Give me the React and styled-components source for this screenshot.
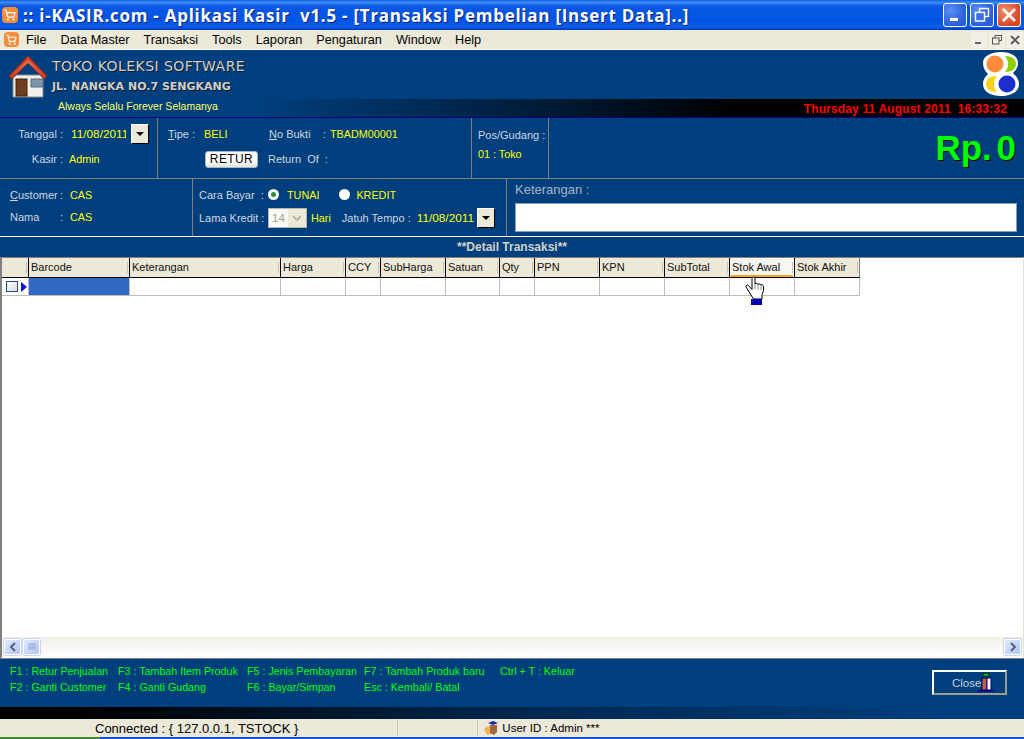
import React from 'react'
import styled, { createGlobalStyle } from 'styled-components'
import { ShoppingCart } from 'lucide-react'

const GlobalStyle = createGlobalStyle`
  html, body { margin: 0; padding: 0; background: #fff; overflow: hidden; }
  #root { width: 1024px; height: 739px; }
`

const ui = `'Liberation Sans', Arial, sans-serif`

const Page = styled.div`
  width: 1024px;
  height: 739px;
  display: flex;
  flex-direction: column;
  position: relative;
  overflow: hidden;
  font-family: ${ui};
  font-size: 12px;
`

const TitleBar = styled.div`
  height: 30px;
  flex: none;
  display: flex;
  align-items: center;
  padding: 0 3px 0 2px;
  box-sizing: border-box;
  background: linear-gradient(180deg, #0a5fe0 0%, #3d8df5 8%, #0a58e4 20%, #0054e3 70%, #0a5fe8 90%, #0038b8 100%);
`

const CartBadge = styled.span`
  display: inline-flex;
  align-items: center;
  justify-content: center;
  flex: none;
  width: ${p => p.$size}px;
  height: ${p => p.$size}px;
  border-radius: 4px;
  background: #f98c3a;
  color: #fff;
`

const Title = styled.div`
  flex: 1;
  margin-left: 5px;
  color: #fff;
  font-family: 'Open Sans', sans-serif;
  font-weight: bold;
  font-size: 17px;
  letter-spacing: 0.74px;
  white-space: pre;
  text-shadow: 1px 1px 0 #0f1f7a;
`

const WinButtons = styled.div`
  display: flex;
  gap: 3px;
`

const WinButton = styled.div`
  width: 24px;
  height: 24px;
  border: 1px solid #fff;
  border-radius: 3px;
  box-sizing: border-box;
  background: ${p => p.$close
    ? 'radial-gradient(circle at 30% 30%, #f0906c, #d9472a 70%)'
    : 'radial-gradient(circle at 30% 30%, #5c8df0, #2b5ed8 70%)'};
  display: flex;
  align-items: center;
  justify-content: center;
`

const MenuBar = styled.div`
  height: 20px;
  flex: none;
  display: flex;
  align-items: center;
  box-sizing: border-box;
  background: #ece9d8;
  border-bottom: 1px solid #fff;
  padding-left: 4px;
  font-size: 12.7px;
`

const MenuItem = styled.span`
  margin-left: ${p => p.$first ? 7 : 14}px;
  color: #000;
`

const MdiButtons = styled.div`
  margin-left: auto;
  display: flex;
  gap: 2px;
  margin-right: 1px;
`

const MdiButton = styled.div`
  width: 16px;
  height: 16px;
  background: #f2f0e6;
  display: flex;
  align-items: center;
  justify-content: center;
`

const Banner = styled.div`
  height: 49px;
  flex: none;
  display: flex;
  background: #003f7d;
  padding: 5px 5px 0 9px;
  box-sizing: border-box;
`

const ShopLines = styled.div`
  margin-left: 5px;
  display: flex;
  flex-direction: column;
`

const ShopName = styled.div`
  color: #d4d0c8;
  font-family: 'DejaVu Sans', sans-serif;
  font-size: ${p => p.$small ? 11 : 14}px;
  font-weight: ${p => p.$small ? 'bold' : 'normal'};
  letter-spacing: ${p => p.$small ? 0 : 0.45}px;
  line-height: 15px;
  margin-top: ${p => p.$small ? 5 : 4}px;
  text-shadow: 1px 1px 0 #10182a;
`

const Logo = styled.svg`
  margin: -3px 0 0 auto;
  flex: none;
`

const DarkBar = styled.div`
  flex: none;
  height: 12px;
  background: linear-gradient(90deg, #000 8%, #00264d 50%, #003f7d 92%);
`

const ClockBar = styled.div`
  flex: none;
  height: 19px;
  box-sizing: border-box;
  display: flex;
  align-items: center;
  justify-content: space-between;
  background: linear-gradient(90deg, #003f7d 0%, #003f7d 25%, #00264d 45%, #000 72%, #000 100%);
  padding: 0 17px 0 58px;
  border-bottom: 1px solid #000080;
`

const Tagline = styled.span`
  color: #ffff66;
  font-size: 10.5px;
  margin-bottom: 5px;
`

const Clock = styled.span`
  color: #f00;
  font-size: 12px;
  font-weight: bold;
  letter-spacing: 0.15px;
  white-space: pre;
  margin-top: 1px;
`

const InfoRow = styled.div`
  flex: none;
  height: ${p => p.$height}px;
  display: flex;
  background: #003f7d;
  border-bottom: ${p => p.$plain ? 'none' : '1px solid #808080'};
  box-sizing: border-box;
`

const Cell = styled.div`
  flex: ${p => p.$width ? `0 0 ${p.$width}px` : 1};
  box-sizing: border-box;
  border-right: ${p => p.$width ? '1px solid #808080' : 'none'};
  display: flex;
  flex-direction: column;
  padding: ${p => p.$pad || '0'};
  gap: ${p => p.$gap ?? 0}px;
`

const Line = styled.div`
  display: flex;
  align-items: center;
  height: ${p => p.$height || 20}px;
`

const Label = styled.span`
  color: #cfd6e2;
  font-size: 11px;
  white-space: pre;
  width: ${p => p.$width ? `${p.$width}px` : 'auto'};
  margin-left: ${p => p.$left || 0}px;
  text-align: ${p => p.$right ? 'right' : 'left'};
  flex: none;
  u { text-underline-offset: 1px; }
`

const Value = styled.span`
  color: #ffff00;
  font-size: ${p => p.$size || 10.8}px;
  white-space: pre;
  flex: none;
  width: ${p => p.$width ? `${p.$width}px` : 'auto'};
  margin-left: ${p => p.$left || 0}px;
  overflow: hidden;
`

const DropButton = styled.div`
  flex: none;
  width: 18px;
  height: 20px;
  box-sizing: border-box;
  margin-left: ${p => p.$left || 0}px;
  background: #ece9d8;
  border-style: solid;
  border-width: 1px;
  border-color: #fff #000 #000 #fff;
  display: flex;
  align-items: center;
  justify-content: center;
  &::after {
    content: '';
    border-left: 4px solid transparent;
    border-right: 4px solid transparent;
    border-top: 4px solid #000;
  }
`

const Retur = styled.div`
  width: 53px;
  height: 17px;
  flex: none;
  margin-left: 37px;
  box-sizing: border-box;
  background: linear-gradient(180deg, #fff 60%, #e6e3d6 100%);
  border: 1px solid #9fb6d4;
  border-radius: 3px;
  color: #000;
  font-size: 12px;
  letter-spacing: 0.4px;
  text-align: center;
  line-height: 15px;
`

const Total = styled.div`
  color: #00ff00;
  font-weight: bold;
  font-size: 35px;
  word-spacing: -5px;
  text-align: right;
  line-height: 40px;
  margin: 10px 8px 0 0;
  text-shadow: 1px 1px 0 #000;
`

const Radio = styled.span`
  flex: none;
  width: 11px;
  height: 11px;
  border-radius: 50%;
  background: #fff;
  margin-left: ${p => p.$left || 0}px;
  display: flex;
  align-items: center;
  justify-content: center;
  &::after {
    content: '';
    width: 5px;
    height: 5px;
    border-radius: 50%;
    background: ${p => p.$on ? '#2f8f3f' : 'transparent'};
  }
`

const SpinBox = styled.div`
  flex: none;
  width: 39px;
  height: 20px;
  box-sizing: border-box;
  border: 1px solid #b8b6a8;
  background: #ece9d8;
  display: flex;
  align-items: stretch;
  color: #a3a294;
  font-size: 11.5px;
`

const SpinText = styled.span`
  width: 19px;
  background: #f8f8f4;
  line-height: 18px;
  text-align: center;
`

const SpinArrow = styled.span`
  flex: 1;
  display: flex;
  align-items: center;
  justify-content: center;
`

const NoteLabel = styled.div`
  color: #a8b4c8;
  font-size: 13px;
  line-height: 16px;
`

const NoteInput = styled.div`
  height: 29px;
  width: 502px;
  background: #fff;
  border: 1px solid #8aa0b8;
  box-sizing: border-box;
  margin-top: 5px;
`

const GridPanel = styled.div`
  flex: none;
  height: 422px;
  box-sizing: border-box;
  border-top: 1px solid #fff;
  display: flex;
  flex-direction: column;
  background: #fff;
`

const GridTitle = styled.div`
  height: 20px;
  flex: none;
  background: #003f7d;
  color: #d4d0c8;
  font-weight: bold;
  font-size: 12px;
  text-align: center;
  line-height: 20px;
`

const GridBody = styled.div`
  flex: 1;
  border-left: 2px solid #808080;
  border-top: 1px solid #808080;
  border-right: 1px solid #e4e2d8;
  padding-bottom: 3px;
  display: flex;
  flex-direction: column;
  min-height: 0;
`

const GridHead = styled.div`
  display: flex;
  height: 20px;
  flex: none;
`

const HeadCell = styled.div`
  width: ${p => p.$width}px;
  flex: none;
  box-sizing: border-box;
  padding-left: 2px;
  background: ${p => p.$hot ? '#f7f6f0' : '#ece9d8'};
  border-right: 1px solid ${p => p.$last ? '#808080' : '#000'};
  border-bottom: 1px solid #000;
  line-height: 19px;
  font-size: 11px;
  color: #111;
  white-space: nowrap;
  overflow: hidden;
  position: relative;
  &::before {
    content: '';
    position: absolute;
    right: 1px;
    top: 4px;
    bottom: 4px;
    width: 1px;
    background: #c6c3b2;
  }
  ${p => p.$hot ? `&::after {
    content: '';
    position: absolute;
    left: 1px;
    right: 1px;
    bottom: 0;
    height: 2px;
    background: #f5a623;
  }` : ''}
`

const GridRow = styled.div`
  display: flex;
  height: 18px;
  flex: none;
`

const RowCell = styled.div`
  width: ${p => p.$width}px;
  flex: none;
  box-sizing: border-box;
  background: ${p => p.$active ? '#316ac5' : '#fff'};
  border-right: 1px solid #bdbdbd;
  border-bottom: 1px solid #bdbdbd;
`

const Indicator = styled.div`
  width: 27px;
  flex: none;
  box-sizing: border-box;
  border-right: 1px solid #bdbdbd;
  border-bottom: 1px solid #bdbdbd;
  display: flex;
  align-items: center;
  padding-left: 4px;
  gap: 3px;
`

const RowBox = styled.span`
  width: 12px;
  height: 11px;
  box-sizing: border-box;
  border: 1px solid #1d4f91;
  background: linear-gradient(135deg, #fff, #ddd);
`

const RowArrow = styled.span`
  border-left: 6px solid #1010e0;
  border-top: 5px solid transparent;
  border-bottom: 5px solid transparent;
`

const GridFill = styled.div`
  flex: 1;
`

const ScrollBar = styled.div`
  flex: none;
  height: 17px;
  display: flex;
  align-items: center;
  background: linear-gradient(180deg, #f3f1ec, #fefefe);
  border-top: 1px solid #eeece4;
  padding: 0 2px 0 2px;
`

const ScrollButton = styled.div`
  flex: none;
  width: 17px;
  height: 16px;
  margin-right: ${p => p.$end ? 0 : 2}px;
  box-sizing: border-box;
  border: 1px solid #fff;
  border-radius: 2px;
  background: linear-gradient(135deg, #dfe8fd, #b4c8f6);
  box-shadow: 0 0 0 1px #c7d5f8;
  display: flex;
  align-items: center;
  justify-content: center;
`

const Footer = styled.div`
  flex: none;
  height: 49px;
  background: #003f7d;
  border-top: 1px solid #808080;
  display: flex;
  box-sizing: border-box;
  padding: 5px 17px 0 10px;
`

const Hints = styled.div`
  flex: none;
  width: ${p => p.$width}px;
  display: flex;
  flex-direction: column;
`

const Hint = styled.span`
  color: #00ff00;
  font-size: 10.7px;
  line-height: 15.5px;
  white-space: pre;
`

const CloseButton = styled.div`
  margin: 6px 0 0 auto;
  width: 75px;
  height: 25px;
  box-sizing: border-box;
  border: 2px solid;
  border-color: #fff #a09c8c #a09c8c #fff;
  color: #c8cfdb;
  font-size: 11.5px;
  display: flex;
  align-items: center;
  padding-left: 18px;
`

const StatusBar = styled.div`
  flex: none;
  height: 18px;
  background: #ece9d8;
  display: flex;
  align-items: center;
  color: #000;
`

const StatusText = styled.span`
  white-space: pre;
  font-size: ${p => p.$size}px;
  margin-left: ${p => p.$left}px;
`

const StatusSplit = styled.span`
  width: 1px;
  height: 14px;
  background: #c8c5b2;
  margin-left: ${p => p.$left}px;
`

const TaskEdge = styled.div`
  flex: 1;
  background: linear-gradient(90deg, #3c8d3c 0 100px, #0a55d0 100px);
`

const Pointer = styled.svg`
  position: absolute;
  left: 744px;
  top: 276px;
`

const Icon = styled.svg`
  flex: none;
  margin-left: ${p => p.$left || 0}px;
`

const columns = [
  ['Barcode', 101], ['Keterangan', 151], ['Harga', 65], ['CCY', 35], ['SubHarga', 65],
  ['Satuan', 54], ['Qty', 35], ['PPN', 65], ['KPN', 65], ['SubTotal', 65],
  ['Stok Awal', 65], ['Stok Akhir', 65],
]

function House() {
  return (
    <Icon width="38" height="44" viewBox="0 0 38 44">
      <path d="M4 20h30v22H4z" fill="#f1efe9" stroke="#8a8a8a" />
      <path d="M0 21 19 1l19 20-3 3L19 8 3 24z" fill="#c8402a" stroke="#8d2a1a" />
      <path d="M19 4 35 21 19 8 3 21z" fill="#e2674a" />
      <rect x="7" y="24" width="11" height="17" fill="#6d3d1c" stroke="#3a2210" />
      <rect x="22" y="24" width="12" height="8" fill="#7d94ad" stroke="#5a6a7a" />
    </Icon>
  )
}

function CloseDoor() {
  return (
    <Icon $left={-3} width="17" height="19" viewBox="0 0 17 19">
      <rect x="5" y="0.5" width="6" height="2.5" fill="#00d000" stroke="#000" strokeWidth="0.6" />
      <rect x="4" y="5" width="5" height="12" fill="#c0603c" stroke="#000080" />
      <rect x="9" y="5" width="4" height="12" fill="#fff" stroke="#000080" />
      <path d="M0 17h17v1.5H0z" fill="#000080" />
    </Icon>
  )
}

function App() {
  return (
    <Page>
      <GlobalStyle />
      <TitleBar>
        <CartBadge $size={16}><ShoppingCart size={12} strokeWidth={2.4} /></CartBadge>
        <Title>:: i-KASIR.com - Aplikasi Kasir  v1.5 - [Transaksi Pembelian [Insert Data]..]</Title>
        <WinButtons>
          <WinButton>
            <Icon width="14" height="14" viewBox="0 0 14 14"><rect x="2" y="10" width="8" height="3" fill="#fff" /></Icon>
          </WinButton>
          <WinButton>
            <Icon width="16" height="16" viewBox="0 0 16 16" fill="none" stroke="#fff" strokeWidth="1.4">
              <rect x="5.5" y="1.5" width="9" height="8" />
              <rect x="1.5" y="5.5" width="9" height="8.5" fill="#3b6ee0" />
            </Icon>
          </WinButton>
          <WinButton $close>
            <Icon width="16" height="16" viewBox="0 0 16 16" stroke="#fff" strokeWidth="2.6">
              <path d="M2 2 14 14M14 2 2 14" />
            </Icon>
          </WinButton>
        </WinButtons>
      </TitleBar>

      <MenuBar>
        <CartBadge $size={15}><ShoppingCart size={11} strokeWidth={2.4} /></CartBadge>
        <MenuItem $first>File</MenuItem>
        <MenuItem>Data Master</MenuItem>
        <MenuItem>Transaksi</MenuItem>
        <MenuItem>Tools</MenuItem>
        <MenuItem>Laporan</MenuItem>
        <MenuItem>Pengaturan</MenuItem>
        <MenuItem>Window</MenuItem>
        <MenuItem>Help</MenuItem>
        <MdiButtons>
          <MdiButton>
            <Icon width="10" height="10" viewBox="0 0 10 10"><rect x="1" y="7" width="6" height="2" fill="#666" /></Icon>
          </MdiButton>
          <MdiButton>
            <Icon width="10" height="10" viewBox="0 0 10 10" fill="none" stroke="#555" strokeWidth="1">
              <rect x="3" y="0.5" width="6.5" height="5" />
              <rect x="0.5" y="3" width="6.5" height="6" fill="#f2f0e6" />
            </Icon>
          </MdiButton>
          <MdiButton>
            <Icon width="10" height="10" viewBox="0 0 10 10" stroke="#555" strokeWidth="1.8">
              <path d="M1 1 9 9M9 1 1 9" />
            </Icon>
          </MdiButton>
        </MdiButtons>
      </MenuBar>

      <Banner>
        <House />
        <ShopLines>
          <ShopName>TOKO KOLEKSI SOFTWARE</ShopName>
          <ShopName $small>JL. NANGKA NO.7 SENGKANG</ShopName>
        </ShopLines>
        <Logo width="36" height="44" viewBox="0 0 36 44">
          <path d="M18 0c10 0 17 4 17 11 0 5-3 8-5 10 3 3 6 6 6 11 0 8-8 12-18 12S0 40 0 32c0-5 3-8 5-10-3-3-5-6-5-11C0 4 8 0 18 0z" fill="#fff" />
          <path d="M22 4c7 0 11 3 11 8s-4 8-11 8c4-4 4-12 0-16z" fill="#90d000" />
          <circle cx="12" cy="12" r="8.5" fill="#ff8c3a" />
          <path d="M14 40c-7 0-11-3-11-8s4-8 11-8c-4 4-4 12 0 16z" fill="#f8d21c" />
          <circle cx="24" cy="32" r="8.5" fill="#1c2ed0" />
        </Logo>
      </Banner>

      <ClockBar>
        <Tagline>Always Selalu Forever Selamanya</Tagline>
        <Clock>Thursday 11 August 2011  16:33:32</Clock>
      </ClockBar>

      <InfoRow $height={61}>
        <Cell $width={158} $pad="6px 0 0 0" $gap={5}>
          <Line>
            <Label $width={63} $right>Tanggal :</Label>
            <Value $left={8} $width={55} $size={11.8}>11/08/2011</Value>
            <DropButton $left={5} />
          </Line>
          <Line>
            <Label $width={63} $right>Kasir :</Label>
            <Value $left={6}>Admin</Value>
          </Line>
        </Cell>
        <Cell $width={314} $pad="6px 0 0 10px" $gap={5}>
          <Line>
            <Label $width={36}><u>T</u>ipe :</Label>
            <Value $width={65}>BELI</Value>
            <Label $width={54}><u>N</u>o Bukti</Label>
            <Label $width={7}>:</Label>
            <Value>TBADM00001</Value>
          </Line>
          <Line>
            <Retur>RETUR</Retur>
            <Label $left={10}>Return  Of  :</Label>
          </Line>
        </Cell>
        <Cell $width={77} $pad="7px 0 0 6px">
          <Line $height={19}><Label>Pos/Gudang :</Label></Line>
          <Line $height={19}><Value>01 : Toko</Value></Line>
        </Cell>
        <Cell>
          <Total>Rp. 0</Total>
        </Cell>
      </InfoRow>

      <InfoRow $height={57} $plain>
        <Cell $width={193} $pad="5px 0 0 10px">
          <Line $height={22}>
            <Label $width={50}><u>C</u>ustomer</Label>
            <Label $width={10}>:</Label>
            <Value>CAS</Value>
          </Line>
          <Line $height={22}>
            <Label $width={50}>Nama</Label>
            <Label $width={10}>:</Label>
            <Value>CAS</Value>
          </Line>
        </Cell>
        <Cell $width={314} $pad="5px 0 0 6px">
          <Line $height={21}>
            <Label $width={69}>Cara Bayar  :</Label>
            <Radio $on />
            <Value $left={8}>TUNAI</Value>
            <Radio $left={20} />
            <Value $left={6}>KREDIT</Value>
          </Line>
          <Line $height={26}>
            <Label $width={69}>Lama Kredit :</Label>
            <SpinBox>
              <SpinText>14</SpinText>
              <SpinArrow>
                <Icon width="10" height="7" viewBox="0 0 10 7" fill="none" stroke="#b8b6a8" strokeWidth="2"><path d="m1 1 4 4 4-4" /></Icon>
              </SpinArrow>
            </SpinBox>
            <Value $left={4}>Hari</Value>
            <Label $left={11}>Jatuh Tempo :</Label>
            <Value $left={6} $size={11.8}>11/08/2011</Value>
            <DropButton $left={3} />
          </Line>
        </Cell>
        <Cell $pad="3px 0 0 8px">
          <NoteLabel>Keterangan :</NoteLabel>
          <NoteInput />
        </Cell>
      </InfoRow>

      <GridPanel>
        <GridTitle>**Detail Transaksi**</GridTitle>
        <GridBody>
          <GridHead>
            <HeadCell $width={27} />
            {columns.map(([name, width]) => (
              <HeadCell key={name} $width={width} $hot={name === 'Stok Awal'} $last={name === 'Stok Akhir'}>{name}</HeadCell>
            ))}
          </GridHead>
          <GridRow>
            <Indicator><RowBox /><RowArrow /></Indicator>
            {columns.map(([name, width], i) => (
              <RowCell key={name} $width={width} $active={i === 0} />
            ))}
          </GridRow>
          <GridFill />
          <ScrollBar>
            <ScrollButton>
              <Icon width="8" height="10" viewBox="0 0 8 10" fill="none" stroke="#4d6185" strokeWidth="2"><path d="M6 1 2 5l4 4" /></Icon>
            </ScrollButton>
            <ScrollButton>
              <Icon width="8" height="7" viewBox="0 0 8 7" stroke="#8ea4d0" strokeWidth="1"><path d="M1 0v7M3 0v7M5 0v7M7 0v7" /></Icon>
            </ScrollButton>
            <GridFill />
            <ScrollButton $end>
              <Icon width="8" height="10" viewBox="0 0 8 10" fill="none" stroke="#4d6185" strokeWidth="2"><path d="m2 1 4 4-4 4" /></Icon>
            </ScrollButton>
          </ScrollBar>
        </GridBody>
      </GridPanel>

      <Footer>
        <Hints $width={108}>
          <Hint>F1 : Retur Penjualan</Hint>
          <Hint>F2 : Ganti Customer</Hint>
        </Hints>
        <Hints $width={129}>
          <Hint>F3 : Tambah Item Produk</Hint>
          <Hint>F4 : Ganti Gudang</Hint>
        </Hints>
        <Hints $width={117}>
          <Hint>F5 : Jenis Pembayaran</Hint>
          <Hint>F6 : Bayar/Simpan</Hint>
        </Hints>
        <Hints $width={136}>
          <Hint>F7 : Tambah Produk baru</Hint>
          <Hint>Esc : Kembali/ Batal</Hint>
        </Hints>
        <Hints $width={100}>
          <Hint>Ctrl + T : Keluar</Hint>
        </Hints>
        <CloseButton>Close<CloseDoor /></CloseButton>
      </Footer>

      <DarkBar />

      <StatusBar>
        <StatusText $left={95} $size={13}>Connected : {'{'} 127.0.0.1, TSTOCK {'}'}</StatusText>
        <StatusSplit $left={99} />
        <StatusSplit $left={79} />
        <Icon $left={5} width="16" height="16" viewBox="0 0 16 16">
          <path d="M1 9 5 6l3 1v7l-4 1z" fill="#f5b050" />
          <path d="M7 5h7v7l-3 3-4-2z" fill="#a0683c" />
          <path d="M5 3l5-2 5 2-5 2z" fill="#1a2fb0" />
        </Icon>
        <StatusText $left={3} $size={11.5}>User ID : Admin ***</StatusText>
      </StatusBar>
      <TaskEdge />

      <Pointer width="20" height="29" viewBox="0 0 20 29">
        <path d="M8 2.5c0-2 3-2 3 0V8c1-1 3-.5 3 .5 1-1 3-.5 3 .5 1-.5 2.500 0 2.500 1.500v4l-1.500 4v4.500H9.500L2 11c-.5-1.500 1.500-2.500 2.500-1.500L8 13.500z" fill="#fff" stroke="#000" strokeWidth="1" />
        <path d="M11 8v5M14 8.500v5M17 9v5" stroke="#777" strokeWidth="0.8" fill="none" />
        <rect x="7" y="23" width="11" height="6" fill="#0000b0" />
      </Pointer>
    </Page>
  )
}

export default App
